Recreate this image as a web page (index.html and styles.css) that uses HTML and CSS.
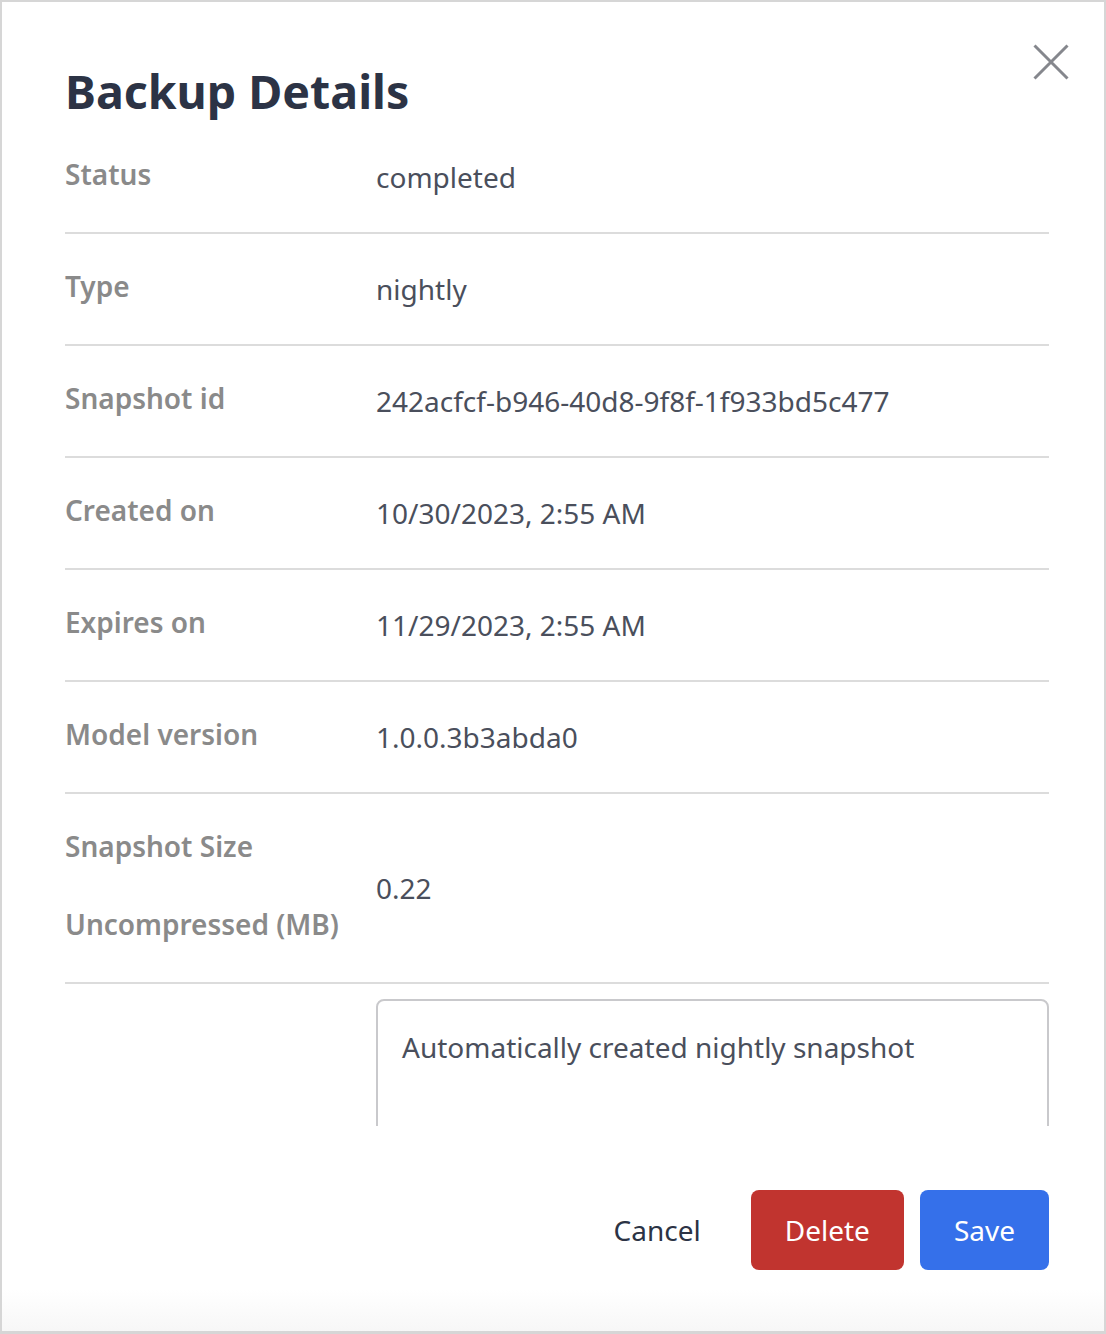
FILE: index.html
```html
<!DOCTYPE html>
<html lang="en">
<head>
<meta charset="utf-8">
<title>Backup Details</title>
<link rel="stylesheet" href="styles.css">
</head>
<body>
<div class="dialog">
  <button class="close" aria-label="Close">
    <svg width="36" height="36" viewBox="0 0 36 36"><path d="M1.5 1.5 L34.5 34.5 M34.5 1.5 L1.5 34.5" stroke="#85878d" stroke-width="3" fill="none"/></svg>
  </button>
  <div class="body">
    <h1 class="title">Backup Details</h1>
    <div class="row"><div class="label">Status</div><div class="value">completed</div></div>
    <div class="row"><div class="label">Type</div><div class="value">nightly</div></div>
    <div class="row"><div class="label">Snapshot id</div><div class="value">242acfcf-b946-40d8-9f8f-1f933bd5c477</div></div>
    <div class="row"><div class="label">Created on</div><div class="value">10/30/2023, 2:55 AM</div></div>
    <div class="row"><div class="label">Expires on</div><div class="value">11/29/2023, 2:55 AM</div></div>
    <div class="row"><div class="label">Model version</div><div class="value">1.0.0.3b3abda0</div></div>
    <div class="row"><div class="label">Snapshot Size<br>Uncompressed (MB)</div><div class="value">0.22</div></div>
    <div class="note-row">
      <div></div>
      <textarea class="note">Automatically created nightly snapshot</textarea>
    </div>
  </div>
  <div class="footer">
    <button class="btn btn-cancel">Cancel</button>
    <button class="btn btn-delete">Delete</button>
    <button class="btn btn-save">Save</button>
  </div>
</div>
</body>
</html>
```
FILE: styles.css
```css
* { box-sizing: border-box; }
html, body { margin: 0; padding: 0; background: #ffffff; }
body { font-family: "Noto Sans", "Open Sans", sans-serif; }

.dialog {
  position: relative;
  height: 100vh;
  border: 2px solid #d6d6d6;
  border-bottom-width: 3px;
  display: flex;
  flex-direction: column;
  background: #ffffff;
}

.close {
  position: absolute;
  top: 42px;
  right: 35px;
  width: 36px;
  height: 36px;
  padding: 0;
  border: 0;
  background: transparent;
  cursor: pointer;
}
.close svg { display: block; }

.body {
  flex: 1;
  overflow: hidden;
  padding: 58px 55px 0 63px;
}

.title {
  margin: 0;
  font-size: 46.5px;
  line-height: 62px;
  font-weight: 700;
  color: #2c3345;
}

.row {
  display: grid;
  grid-template-columns: 311px 1fr;
  padding: 16px 0;
  border-bottom: 2px solid #dcdcdc;
}

.label {
  font-size: 28px;
  line-height: 78px;
  font-weight: 600;
  color: #8a8a8a;
  margin-top: -3px;
  margin-bottom: 3px;
}

.value {
  align-self: center;
  font-size: 28px;
  color: #4a4f5c;
}

.note-row {
  display: grid;
  grid-template-columns: 311px 1fr;
  padding-top: 15px;
}

.note {
  display: block;
  width: 100%;
  height: 170px;
  border: 2px solid #c9c9cc;
  border-radius: 8px;
  padding: 27px 24px;
  font-family: inherit;
  font-size: 28px;
  line-height: 38px;
  color: #4a4f5c;
  resize: none;
  outline: none;
}

.footer {
  display: flex;
  justify-content: flex-end;
  gap: 16px;
  padding: 64px 55px 61px 0;
  background: linear-gradient(#ffffff 80%, #f7f7f7 100%);
}

.btn {
  height: 80px;
  padding: 0 34px;
  border: 0;
  border-radius: 8px;
  font-family: inherit;
  font-size: 28px;
  cursor: pointer;
}
.btn-cancel { background: transparent; color: #2c3345; }
.btn-delete { background: #c1342f; color: #ffffff; }
.btn-save { background: #3570ea; color: #ffffff; }
```
